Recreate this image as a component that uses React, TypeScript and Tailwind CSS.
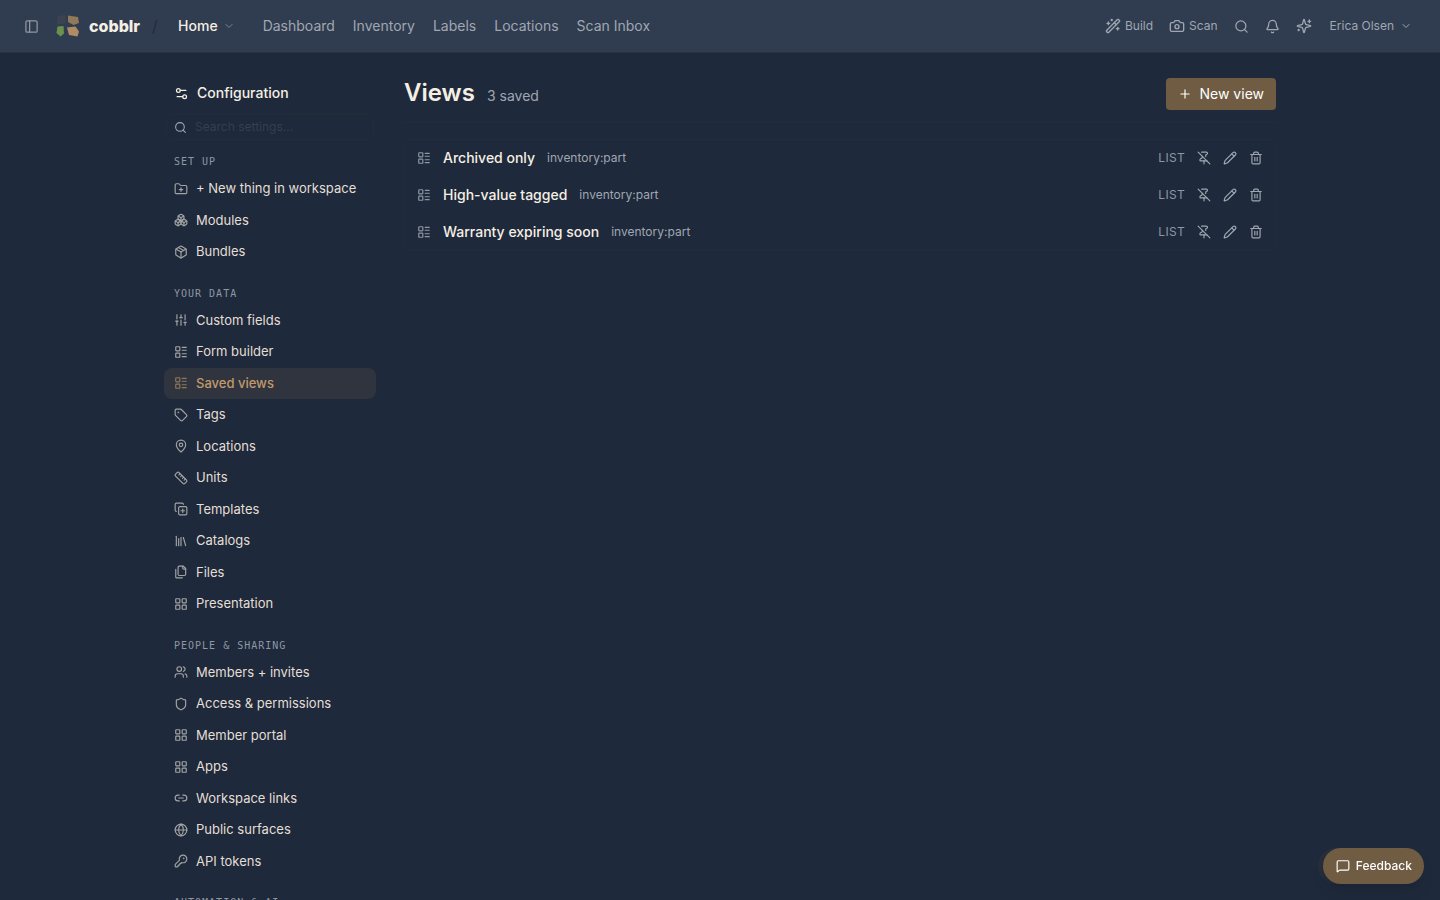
import React, { useState } from 'react';
import {
  Bell, Boxes, Camera, ChevronDown, CopyPlus, FolderPlus, Globe, KeyRound, LayoutGrid, LayoutList,
  Library, Link2, MapPin, MessageSquare, Package, PanelLeft, Pencil, PinOff, Plus, Ruler,
  Search, Settings2, Shield, SlidersVertical, Tag, Trash2, Users, WandSparkles,
} from 'lucide-react';

interface NavItem {
  label: string;
  icon: React.ComponentType<{ className?: string }>;
}

interface NavSection {
  title: string;
  items: NavItem[];
}

interface SavedView {
  name: string;
  target: string;
  layout: string;
}

const FilesIcon: React.FC<{ className?: string }> = ({ className }) => (
  <svg
    viewBox="0 0 24 24"
    className={className}
    fill="none"
    stroke="currentColor"
    strokeWidth={2}
    strokeLinecap="round"
    strokeLinejoin="round"
    aria-hidden="true"
  >
    <path d="M20 7h-3a2 2 0 0 1-2-2V2" />
    <path d="M9 18a2 2 0 0 1-2-2V4a2 2 0 0 1 2-2h7l4 4v10a2 2 0 0 1-2 2Z" />
    <path d="M3 7.6v12.8A1.6 1.6 0 0 0 4.6 22h9.8" />
  </svg>
);

const SparklesIcon: React.FC<{ className?: string }> = ({ className }) => (
  <svg
    viewBox="0 0 24 24"
    className={className}
    fill="none"
    stroke="currentColor"
    strokeWidth={2}
    strokeLinecap="round"
    strokeLinejoin="round"
    aria-hidden="true"
  >
    <path d="M9.937 15.5A2 2 0 0 0 8.5 14.063l-6.135-1.582a.5.5 0 0 1 0-.962L8.5 9.936A2 2 0 0 0 9.937 8.5l1.582-6.135a.5.5 0 0 1 .963 0L14.063 8.5A2 2 0 0 0 15.5 9.937l6.135 1.581a.5.5 0 0 1 0 .964L15.5 14.063a2 2 0 0 0-1.437 1.437l-1.582 6.135a.5.5 0 0 1-.963 0z" />
    <path d="M20 3v4M22 5h-4M4 17v2M5 18H3" />
  </svg>
);

const SECTIONS: NavSection[] = [
  {
    title: 'Set up',
    items: [
      { label: '+ New thing in workspace', icon: FolderPlus },
      { label: 'Modules', icon: Boxes },
      { label: 'Bundles', icon: Package },
    ],
  },
  {
    title: 'Your data',
    items: [
      { label: 'Custom fields', icon: SlidersVertical },
      { label: 'Form builder', icon: LayoutList },
      { label: 'Saved views', icon: LayoutList },
      { label: 'Tags', icon: Tag },
      { label: 'Locations', icon: MapPin },
      { label: 'Units', icon: Ruler },
      { label: 'Templates', icon: CopyPlus },
      { label: 'Catalogs', icon: Library },
      { label: 'Files', icon: FilesIcon },
      { label: 'Presentation', icon: LayoutGrid },
    ],
  },
  {
    title: 'People & sharing',
    items: [
      { label: 'Members + invites', icon: Users },
      { label: 'Access & permissions', icon: Shield },
      { label: 'Member portal', icon: LayoutGrid },
      { label: 'Apps', icon: LayoutGrid },
      { label: 'Workspace links', icon: Link2 },
      { label: 'Public surfaces', icon: Globe },
      { label: 'API tokens', icon: KeyRound },
    ],
  },
  { title: 'Automation & AI', items: [] },
];

const VIEWS: SavedView[] = [
  { name: 'Archived only', target: 'inventory:part', layout: 'list' },
  { name: 'High-value tagged', target: 'inventory:part', layout: 'list' },
  { name: 'Warranty expiring soon', target: 'inventory:part', layout: 'list' },
];

const LINKS = ['Dashboard', 'Inventory', 'Labels', 'Locations', 'Scan Inbox'];

const Logo: React.FC = () => (
  <svg viewBox="0 0 24 24" className="w-6 h-6" aria-hidden="true">
    <path d="M2.5 2 10.5 1 11 9.500 2 10.500Z" fill="#3b4352" />
    <path d="M13 1.500 23 3 24 9 18.500 11 13 8Z" fill="#92795a" />
    <path d="M2.500 12.500 8.500 12 9 19.500 5.500 22.500 1.500 19Z" fill="#6b924d" />
    <path d="M12 13.500 20.500 12.500 24 17.500 22.500 22.500 14 21Z" fill="#b08c64" />
  </svg>
);

const TopBar: React.FC = () => (
  <header className="h-[53px] shrink-0 flex items-center justify-between pl-6 pr-7 bg-[#303c4f] border-b border-[#2d323b] text-[#a0a7b1]">
    <div className="flex items-center">
      <button aria-label="Toggle sidebar" className="text-[#8f97a3] hover:text-white">
        <PanelLeft className="w-[15px] h-[15px]" />
      </button>
      <a href="#" className="ml-4 flex items-center gap-2.5 text-base font-extrabold text-[#f5efe3]">
        <Logo />
        <span>cobblr</span>
      </a>
      <span className="ml-3 w-5 text-base font-light text-[#22272f]">/</span>
      <button className="ml-1.5 flex items-center gap-[5px] text-sm font-medium text-[#f5efe3]">
        Home
        <ChevronDown className="w-3 h-3 text-[#7c8593]" />
      </button>
      <nav className="ml-7 flex items-center gap-[18px] text-sm">
        {LINKS.map(link => (
          <a key={link} href="#" className="hover:text-white transition-colors">{link}</a>
        ))}
      </nav>
    </div>

    <div className="flex items-center gap-4 text-xs">
      <button className="flex items-center gap-1 hover:text-white">
        <WandSparkles className="w-4 h-4" />
        Build
      </button>
      <button className="flex items-center gap-1 hover:text-white">
        <Camera className="w-4 h-4" />
        Scan
      </button>
      <button aria-label="Search" className="hover:text-white">
        <Search className="w-[15px] h-[15px]" />
      </button>
      <button aria-label="Notifications" className="hover:text-white">
        <Bell className="w-[15px] h-[15px]" />
      </button>
      <button aria-label="Assistant" className="hover:text-white">
        <SparklesIcon className="w-4 h-4" />
      </button>
      <button className="ml-0.5 flex items-center gap-1.5 hover:text-white">
        Erica Olsen
        <ChevronDown className="w-3 h-3" />
      </button>
    </div>
  </header>
);

const Sidebar: React.FC = () => {
  const [active, setActive] = useState('Saved views');
  const [query, setQuery] = useState('');

  return (
    <aside className="w-[212px] shrink-0 pt-[29px]">
      <h2 className="flex items-center gap-2 px-2.5 text-sm leading-[22px] font-medium text-[#f5efe3]">
        <Settings2 className="w-[15px] h-[15px]" />
        Configuration
      </h2>

      <label className="mx-0.5 mt-2.5 h-[26px] flex items-center gap-2 px-[7px] rounded-md border border-[#262b35] text-[#a0a7b1]">
        <Search className="w-[13px] h-[13px] shrink-0" />
        <input
          type="text"
          aria-label="Search settings"
          placeholder="Search settings..."
          value={query}
          onChange={e => setQuery(e.target.value)}
          className="w-full min-w-0 bg-transparent text-xs outline-none placeholder:text-[#353f4f]"
        />
      </label>

      <nav className="mt-3.5">
        {SECTIONS.map(section => (
          <div key={section.title} className="mb-[18px]">
            <h3 className="px-2.5 pb-1 font-['DejaVu_Sans_Mono',monospace] text-[10px] leading-[15px] tracking-widest uppercase text-[#8f97a3]">
              {section.title}
            </h3>
            {section.items.map(({ label, icon: Icon }) => (
              <a
                key={label}
                href="#"
                onClick={() => setActive(label)}
                className={`flex items-center gap-2 px-2.5 py-1.5 rounded-lg text-[13px] leading-normal ${
                  label === active ? 'bg-[#2f343f] text-[#c19a6b] font-medium' : 'text-[#e4dfd5] hover:bg-white/5'
                }`}
              >
                <Icon className={`w-3.5 h-3.5 shrink-0 ${label === active ? 'text-[#927757]' : 'text-[#a3a4a4]'}`} />
                {label}
              </a>
            ))}
          </div>
        ))}
      </nav>
    </aside>
  );
};

const ViewRow: React.FC<{ view: SavedView }> = ({ view }) => (
  <li className="flex items-center gap-3 px-3 h-9 text-[#a0a7b1]">
    <LayoutList className="w-3.5 h-3.5 text-[#8f97a3]" />
    <a href="#" className="text-sm font-medium text-[#f5efe3] hover:underline">{view.name}</a>
    <span className="text-xs">{view.target}</span>
    <span className="ml-auto text-xs tracking-wide uppercase text-[#8f97a3]">{view.layout}</span>
    <button aria-label={`Unpin ${view.name}`} className="hover:text-white">
      <PinOff className="w-3.5 h-3.5" />
    </button>
    <button aria-label={`Edit ${view.name}`} className="hover:text-white">
      <Pencil className="w-3.5 h-3.5" />
    </button>
    <button aria-label={`Delete ${view.name}`} className="hover:text-white">
      <Trash2 className="w-3.5 h-3.5" />
    </button>
  </li>
);

const App: React.FC = () => {
  return (
    <div className="h-screen overflow-hidden flex flex-col bg-[#1e293b] font-['Inter',sans-serif]">
      <TopBar />

      <div className="flex-1 min-h-0 overflow-y-auto [scrollbar-width:none]">
        <div className="max-w-6xl mx-auto px-5 flex gap-7">
          <Sidebar />

          {/* Saved views */}
          <main className="flex-1 min-w-0 pt-[25px]">
            <div className="flex items-start justify-between pb-3 border-b border-[#262b35]">
              <div className="flex items-baseline gap-3">
                <h1 className="text-2xl leading-[30px] font-semibold text-[#f5efe3]">Views</h1>
                <span className="text-sm text-[#a0a7b1]">3 saved</span>
              </div>
              <button className="h-8 flex items-center gap-2 px-3 rounded-sm bg-[#6f5c43] hover:bg-[#7d684c] text-sm text-white">
                <Plus className="w-3.5 h-3.5" />
                New view
              </button>
            </div>

            <ul className="mt-4 flex flex-col gap-px rounded-sm border border-[#262b35]">
              {VIEWS.map(view => (
                <ViewRow key={view.name} view={view} />
              ))}
            </ul>
          </main>
        </div>
      </div>

      {/* Feedback launcher, with the collapsed tab peeking out behind it */}
      <div className="fixed right-4 bottom-4">
        <span className="absolute -left-[5px] top-0 w-9 h-9 rounded-full bg-[#272e3a]" />
        <button className="relative h-9 flex items-center gap-1.5 pl-[13px] pr-3 rounded-full bg-[#6f5c43] text-xs font-medium text-white shadow-lg">
          <MessageSquare className="w-3.5 h-3.5" />
          Feedback
        </button>
      </div>
    </div>
  );
};

export default App;
